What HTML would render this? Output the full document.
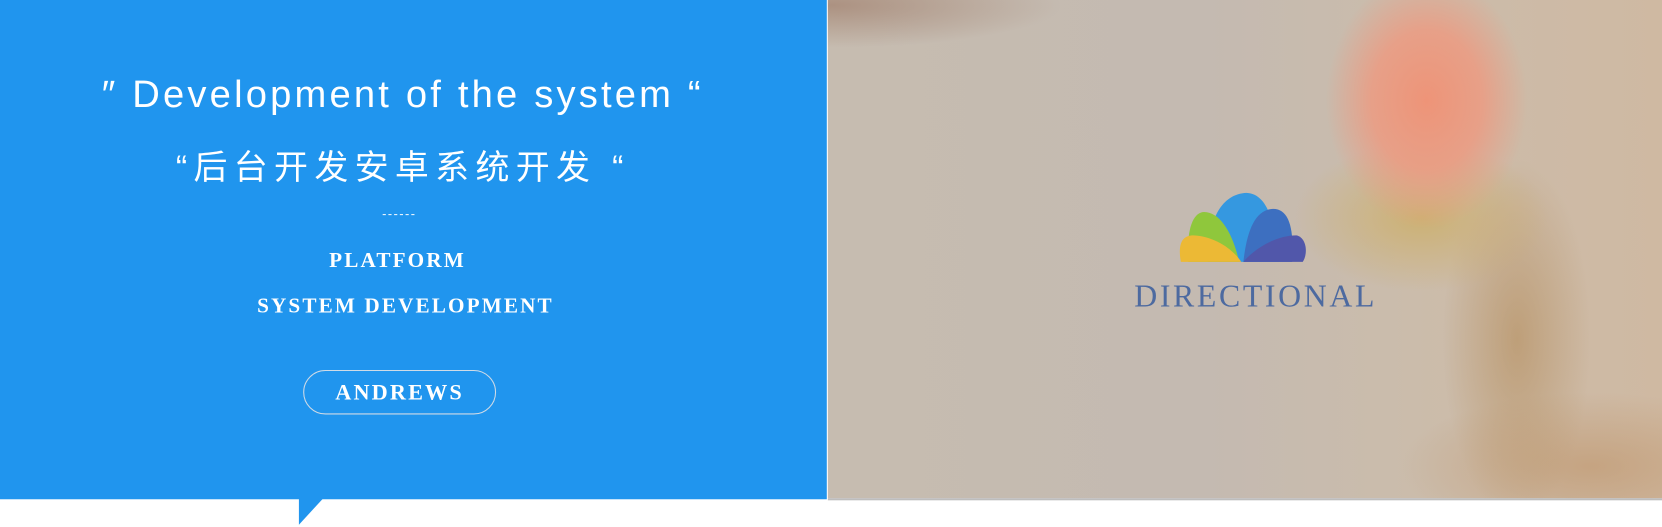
<!DOCTYPE html>
<html><head><meta charset="utf-8"><style>
body{margin:0;width:1662px;height:527px;background:#fff;position:relative;overflow:hidden;font-family:"Liberation Sans","Noto Sans CJK SC",sans-serif}
#wrap{position:absolute;left:0;top:0;width:1568px;height:497px;transform:scale(1.06);transform-origin:0 0}
.blue{position:absolute;left:0;top:0;width:780px;height:471px;background:#2095ee}
.tri{position:absolute;left:282px;top:470px;width:0;height:0;border-top:25px solid #2095ee;border-right:23px solid transparent}
.photo{position:absolute;left:781px;top:0;width:787px;height:470px;border-bottom:2px solid #bdbdbd;overflow:hidden;
background:
radial-gradient(ellipse 95px 120px at 565px 95px,rgba(238,148,120,1) 0%,rgba(236,155,130,.85) 55%,rgba(236,155,130,0) 100%),
radial-gradient(ellipse 120px 70px at 560px 205px,rgba(205,175,105,.85),rgba(205,175,105,0)),
radial-gradient(ellipse 70px 170px at 650px 320px,rgba(180,140,90,.6),rgba(180,140,90,0)),
radial-gradient(ellipse 180px 70px at 720px 440px,rgba(190,145,100,.55),rgba(190,145,100,0)),
radial-gradient(ellipse 220px 40px at 0px 5px,rgba(150,110,90,.55),rgba(150,110,90,0)),
linear-gradient(90deg,#c6bcb0 0%,#c4bab1 45%,#cbbcab 70%,#cfb9a2 100%)}
.w{position:absolute;color:#fff;text-align:center;left:0;width:760px}
.t1{top:68px;font-size:36px;letter-spacing:3px}
.t2{top:133px;font-size:32px;letter-spacing:6px}
.deco{font-family:"Liberation Serif",serif;font-weight:bold;letter-spacing:2px}
.btn{position:absolute;left:286px;top:349px;width:180px;height:40px;border:1px solid #d0dbe6;border-radius:21px;color:#fff;text-align:center;line-height:40px;font-size:21px}
</style></head><body><div id="wrap">
<div class="blue"></div><div class="tri"></div>
<div class="w t1">″ Development of the system “</div>
<div class="w t2">“后台开发安卓系统开发 “</div>
<div style="position:absolute;left:361px;top:202px;width:30px;border-top:1px dashed #fff"></div>
<div class="w deco" style="left:0;width:750px;top:235px;font-size:20px">PLATFORM</div>
<div class="w deco" style="left:0;width:765px;top:278px;font-size:20px">SYSTEM DEVELOPMENT</div>
<div class="btn deco">ANDREWS</div>
<div class="photo">
<svg style="position:absolute;left:330px;top:180px" width="125" height="70" viewBox="0 0 125 70">
<path d="M28 67 C28 30 40 3 65 2 C85 3 92 30 95 67Z" fill="#3598e0"/>
<path d="M10 67 C8 35 15 20 25 20 C40 20 52 40 58 67Z" fill="#8fc73c"/>
<path d="M62 67 C65 40 72 18 90 17 C105 17 110 35 108 67Z" fill="#3d6fc0"/>
<path d="M3 67 C0 50 4 42 15 42 C35 43 52 55 60 67Z" fill="#ecb935"/>
<path d="M62 67 C75 52 95 42 112 42 C122 44 123 60 118 67Z" fill="#5157aa"/>
</svg>
<div style="position:absolute;left:289px;top:263px;font-family:'Liberation Serif',serif;font-size:30px;color:#4d6aa0;letter-spacing:2.5px">DIRECTIONAL</div>
</div>
</div></body></html>
